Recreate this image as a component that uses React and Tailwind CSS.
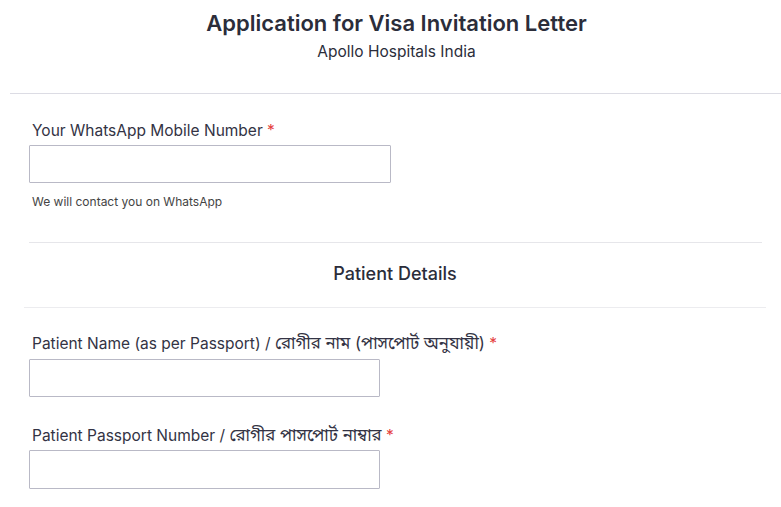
import React from "react";

const font = { fontFamily: "Inter, 'Noto Sans', 'Noto Sans Bengali', sans-serif" };

function Label({ children }) {
  return (
    <label className="block text-[15.5px] leading-5 text-[#333344] pl-[3px]">
      {children} <span className="text-[#e53e3e]">*</span>
    </label>
  );
}

function Bn({ children }) {
  return <span className="text-[16.8px] leading-[16px]">{children}</span>;
}

export default function App() {
  return (
    <div className="bg-white w-[781px] h-[507px] overflow-hidden text-[#2d2f3a]" style={font}>
      <div className="pt-[9px] pl-[12px] text-center">
        <h1 className="text-[22px] leading-7 font-semibold text-[#2b2d3a]">
          Application for Visa Invitation Letter
        </h1>
        <p className="mt-[5px] text-[15.5px] leading-5 text-[#2b2d3a]">Apollo Hospitals India</p>
      </div>
      <div className="ml-[10px] mt-[31px] border-t border-[#dcdce4]" />

      <div className="px-[29px] pt-[27px]">
        <Label>Your WhatsApp Mobile Number</Label>
        <input className="mt-[4px] block w-[362px] h-[38px] border border-[#b9b9c6] rounded-[1px]" />
        <p className="mt-[11px] pl-[3px] text-[12px] leading-4 text-[#444]">We will contact you on WhatsApp</p>
      </div>

      <div className="ml-[29px] mr-[19px] mt-[32px] border-t border-[#e6e6ea]" />
      <h2 className="text-center text-[18px] leading-6 font-medium text-[#2b2d3a] pl-[9px] mt-[19px]">
        Patient Details
      </h2>
      <div className="ml-[24px] mr-[15px] mt-[21px] border-t border-[#ececef]" />

      <div className="px-[29px] pt-[26px]">
        <Label>
          Patient Name (as per Passport) / <Bn>রোগীর নাম (পাসপোর্ট অনুযায়ী)</Bn>
        </Label>
        <input className="mt-[5px] block w-[351px] h-[38px] border border-[#b9b9c6] rounded-[1px]" />
        <div className="mt-[29px]">
          <Label>
            Patient Passport Number / <Bn>রোগীর পাসপোর্ট নাম্বার</Bn>
          </Label>
        </div>
        <input className="mt-[4px] block w-[351px] h-[39px] border border-[#b9b9c6] rounded-[1px]" />
      </div>
    </div>
  );
}
